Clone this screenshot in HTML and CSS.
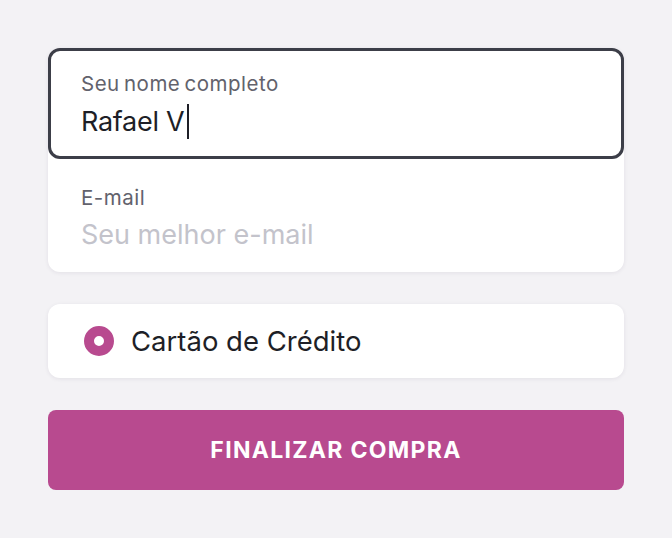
FILE: index.html
```html
<!DOCTYPE html>
<html lang="pt-BR">

<head>
    <meta charset="UTF-8">
    <meta name="viewport" content="width=device-width, initial-scale=1.0">
    <title>Checkout</title>
    <link rel="stylesheet" href="styles.css">
</head>

<body>
    <div class="checkout">
        <div class="fields-card">
            <div class="field field-active">
                <div class="field-label">Seu nome completo</div>
                <div class="field-value">Rafael V<span class="caret"></span></div>
            </div>
            <div class="field field-email">
                <div class="field-label">E-mail</div>
                <div class="field-value placeholder">Seu melhor e-mail</div>
            </div>
        </div>

        <div class="payment-card">
            <span class="radio"></span>
            <span class="payment-label">Cartão de Crédito</span>
        </div>

        <button class="submit-btn">FINALIZAR COMPRA</button>
    </div>
</body>

</html>
```

FILE: styles.css
```css
body {
    margin: 0;
    background-color: #f3f2f5;
    font-family: Inter, "Noto Sans", sans-serif;
}

.checkout {
    display: flex;
    flex-direction: column;
    gap: 32px;
    padding: 48px;
}

.fields-card {
    display: flex;
    flex-direction: column;
    background-color: #fff;
    border-radius: 12px;
    box-shadow: 0 1px 4px rgba(40, 30, 60, .08);
}

.field {
    display: flex;
    flex-direction: column;
    gap: 8px;
    padding: 21px 30px 17px;
    border: 3px solid transparent;
    border-radius: 12px;
}

/* o campo de e-mail fica um pouco mais baixo */
.field-email {
    padding-top: 24px;
}

.field-active {
    border-color: #3c3e48;
}

.field-label {
    font-size: 20.5px;
    line-height: 24px;
    color: #62626c;
    letter-spacing: 0.5px;
    word-spacing: -2px;
}

.field-value {
    display: flex;
    align-items: center;
    font-size: 27px;
    line-height: 34px;
    color: #1e1f27;
    letter-spacing: -0.3px;
}

.field-value.placeholder {
    color: #c3c3cb;
    letter-spacing: 0;
}

.caret {
    width: 2px;
    height: 35px;
    margin-left: 3px;
    background-color: #1e1f27;
}

.payment-card {
    display: flex;
    align-items: center;
    gap: 17px;
    height: 74px;
    padding: 0 36px;
    background-color: #fff;
    border-radius: 12px;
    box-shadow: 0 1px 4px rgba(40, 30, 60, .08);
}

.radio {
    width: 10px;
    height: 10px;
    border: 10px solid #b84a8f;
    border-radius: 50%;
    background-color: #fff;
}

.payment-label {
    font-size: 27.5px;
    color: #1e1f27;
}

.submit-btn {
    height: 80px;
    border: none;
    border-radius: 8px;
    background-color: #b84a8f;
    color: #fff;
    font-family: Inter, "Noto Sans", sans-serif;
    font-size: 23px;
    font-weight: 700;
    letter-spacing: 1.3px;
}
```
